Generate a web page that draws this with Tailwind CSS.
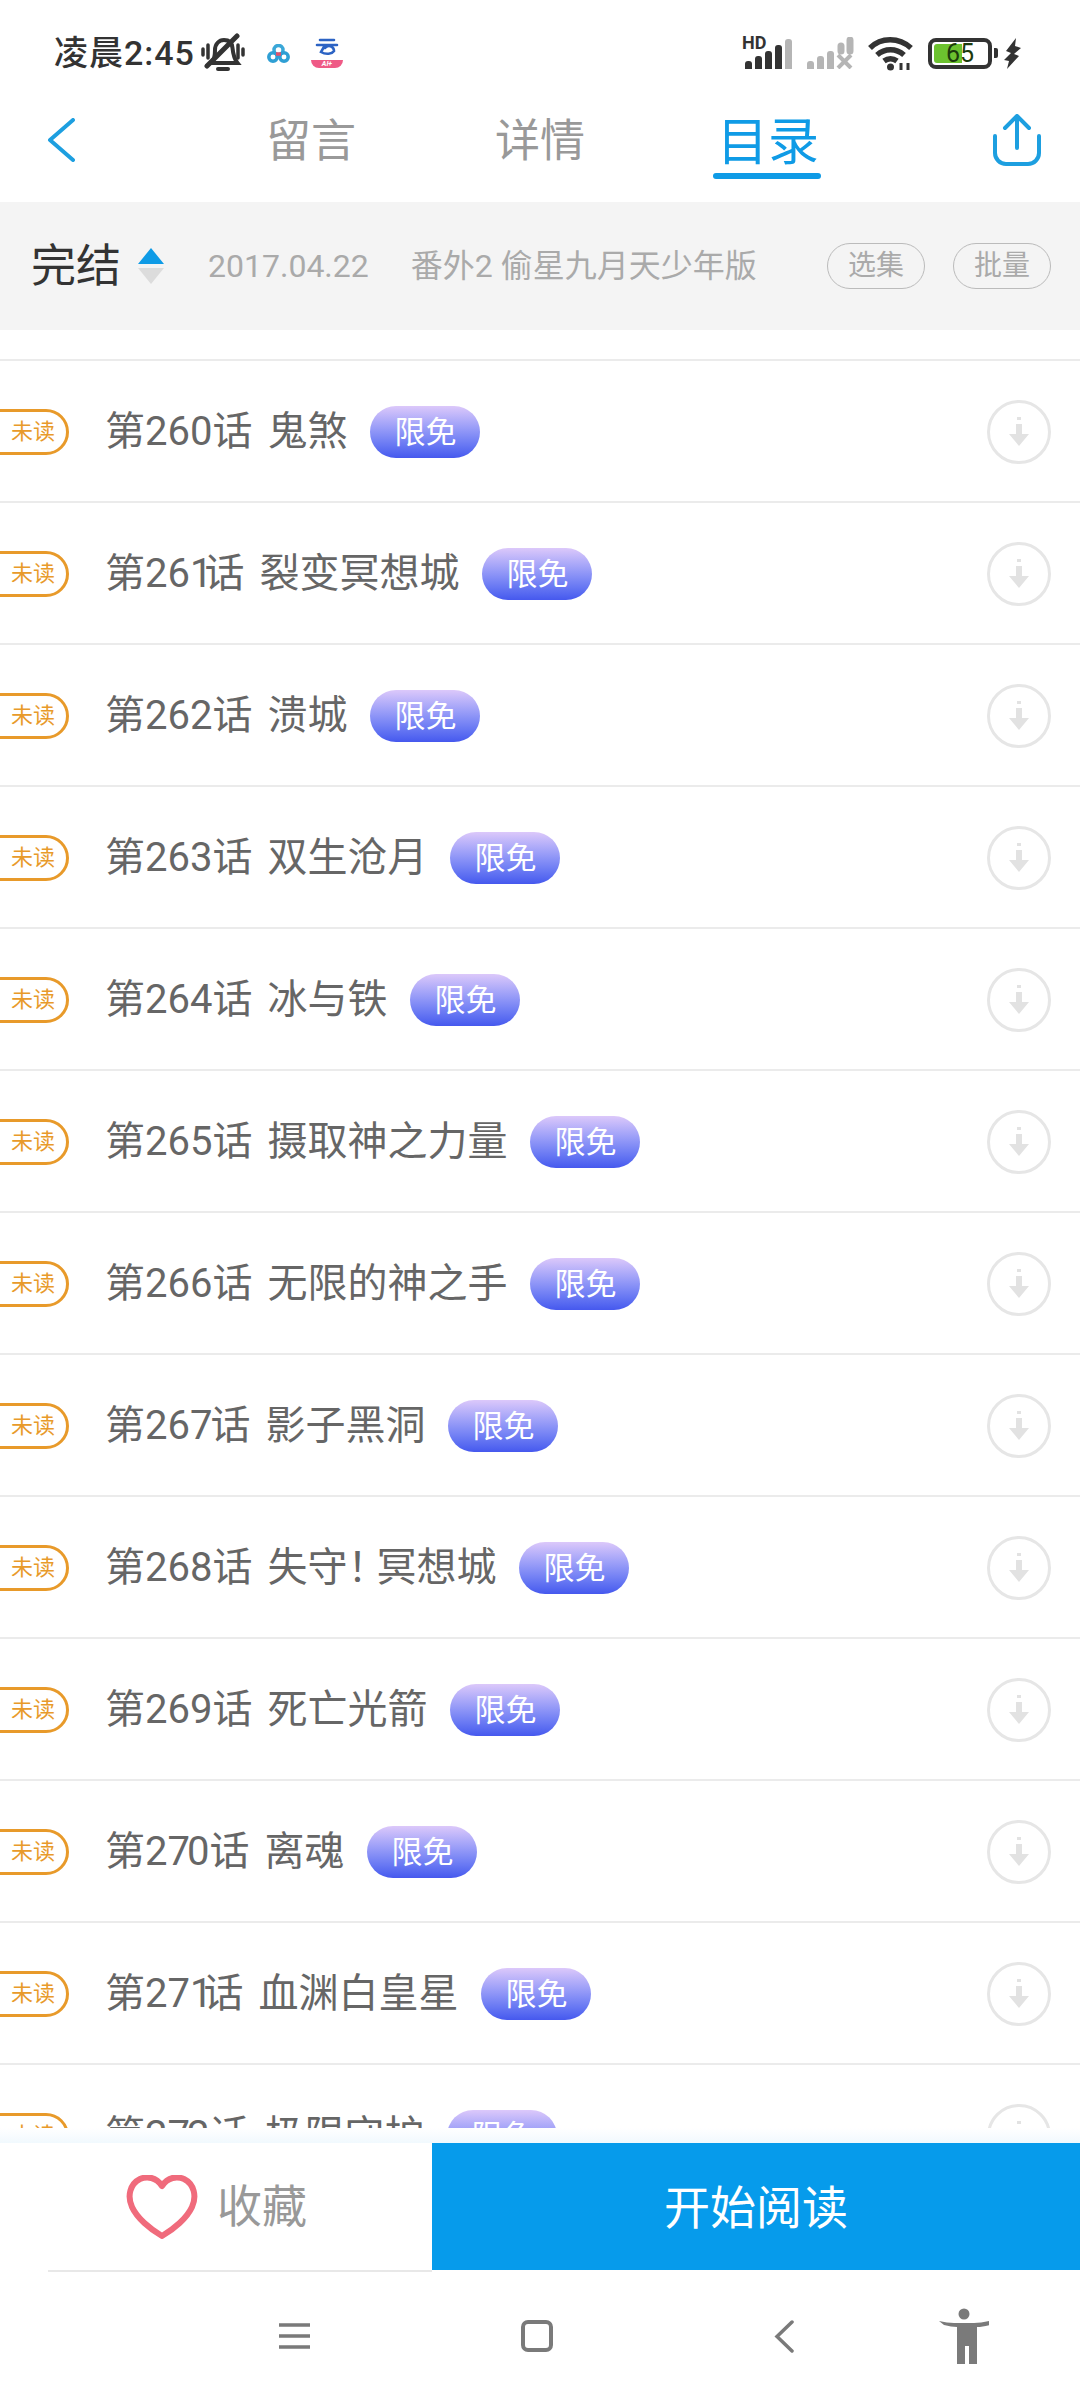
<!DOCTYPE html>
<html lang="zh-CN">
<head>
    <meta charset="UTF-8">
    <title>目录</title>
    <script src="https://cdn.jsdelivr.net/npm/@tailwindcss/browser@4"></script>
</head>
<body class="bg-white font-['Roboto','Noto_Sans_CJK_SC',sans-serif]">
<div class="w-[1080px] h-[2400px] flex flex-col overflow-hidden bg-white">

    <!-- status bar -->
    <div class="h-[106px] shrink-0 flex items-center pl-[54px] pr-[59px] text-[#333]">
        <span class="text-[34px] leading-none font-medium tracking-[1px]">凌晨2:45</span>
        <svg class="ml-[6px]" width="44" height="40" viewBox="0 0 44 40" fill="none" stroke="#333" stroke-linecap="round"><path d="M2 16v6M7 12v13M37 12v13M42 16v6" stroke-width="3.500"/><path d="M10 30c4-3 4-8 4-13 0-6 4-10 9-10s8 3 8.500 8c.5 5 1 10 5 15z" stroke-width="4"/><path d="M17 36h10" stroke-width="4"/><path d="M6 33 36 3" stroke-width="5"/></svg>
        <svg class="ml-[22px]" width="23" height="19" viewBox="0 0 23 19" fill="none" stroke-width="3.500"><circle cx="11.500" cy="6" r="4.500" stroke="#3aa7d8"/><circle cx="6" cy="13" r="4.200" stroke="#2f9fd4"/><circle cx="17" cy="13" r="4.200" stroke="#2f9fd4"/><path d="M9 10h5" stroke="#e0526b"/></svg>
        <div class="ml-[21px] w-[32px] h-[30px] flex flex-col items-center">
            <svg width="24" height="22" viewBox="0 0 24 22" fill="none" stroke="#2c63c4" stroke-width="2.600" stroke-linecap="round"><path d="M5 2h14M2 7h20M10 7l-4 7c5 3 11 2 13-1a5 5 0 0 0-9-3"/></svg>
            <div class="w-[32px] h-[8px] rounded-b-full rounded-t-[3px] bg-[#ef5a86] flex items-center justify-center text-[7px] leading-none font-bold italic text-white">AI+</div>
        </div>
        <div class="ml-auto flex items-center">
            <div class="relative w-[49px] h-[32px]">
                <span class="absolute left-[-3px] top-[-3px] text-[18px] leading-none font-bold text-[#333]">HD</span>
                <div class="absolute inset-0 flex items-end gap-[3px]">
                    <i class="block w-[7px] h-[8px] rounded-t-[3px] bg-[#333]"></i>
                    <i class="block w-[7px] h-[13px] rounded-t-[3px] bg-[#333]"></i>
                    <i class="block w-[7px] h-[18px] rounded-t-[3px] bg-[#333]"></i>
                    <i class="block w-[7px] h-[24px] rounded-t-[3px] bg-[#333]"></i>
                    <i class="block w-[7px] h-[30px] rounded-t-[3px] bg-[#b5b5b5]"></i>
                </div>
            </div>
            <div class="relative ml-[13px] w-[47px] h-[32px] flex items-end gap-[3px]">
                <i class="block w-[7px] h-[8px] rounded-t-[3px] bg-[#b5b5b5]"></i>
                <i class="block w-[7px] h-[13px] rounded-t-[3px] bg-[#b5b5b5]"></i>
                <i class="block w-[7px] h-[18px] rounded-t-[3px] bg-[#b5b5b5]"></i>
                <svg class="absolute right-0 top-0" width="18" height="32" viewBox="0 0 18 32" fill="none" stroke="#b5b5b5"><path d="M5 14v-5M14 14V3" stroke-width="7" stroke-linecap="round"/><path d="M2 18l13 13M15 18 2 31" stroke-width="4"/></svg>
            </div>
            <svg class="ml-[13px]" width="47" height="35" viewBox="0 0 47 35" fill="none" stroke="#333" stroke-width="5.500"><path d="M3 12c11-11 29-11 41 0"/><path d="M10 19c8-7 19-7 27 0"/><path d="M17 25c4-3 9-3 13 0"/><circle cx="23.500" cy="31" r="3.500" fill="#333" stroke="none"/><path d="M34 27v7M41 27v7" stroke-width="3" stroke="#333"/></svg>
            <div class="ml-[14px] relative w-[64px] h-[31px] border-[4px] border-[#333] rounded-[8px] p-[2px]">
                <div class="h-full w-[28px] rounded-l-[3px] bg-[#6cc22f]"></div>
                <span class="absolute inset-0 flex items-center justify-center text-[25px] leading-none text-[#1c3a0c]">65</span>
            </div>
            <i class="block ml-[2px] w-[4px] h-[10px] rounded-r-[2px] bg-[#333]"></i>
            <svg class="ml-[6px]" width="17" height="31" viewBox="0 0 17 31" fill="#333"><path d="M12 0 2 13l5 2-7 7 5 1-2 8L15 18l-5-2 7-6-6-2z"/></svg>
        </div>
    </div>

    <!-- tabs -->
    <div class="h-[96px] shrink-0 flex items-start">
        <svg class="ml-[47px] mt-[12px]" width="28" height="44" viewBox="0 0 28 44" fill="none" stroke="#1d9fe0" stroke-width="4" stroke-linecap="round" stroke-linejoin="round"><path d="M26 2 3 22l23 20"/></svg>
        <span class="ml-[191px] mt-[13px] text-[45px] leading-none text-[#999]">留言</span>
        <span class="ml-[139px] mt-[13px] text-[45px] leading-none text-[#999]">详情</span>
        <div class="ml-[128px] mt-[11px] w-[108px] flex flex-col items-center">
            <span class="pl-[2px] text-[51px] leading-none text-[#0f9be6]">目录</span>
            <i class="block mt-[5px] w-full h-[6px] rounded-full bg-[#0f9be6]"></i>
        </div>
        <svg class="ml-auto mr-[38px] mt-[8px]" width="50" height="52" viewBox="0 0 50 52" fill="none" stroke="#1d9fe0" stroke-width="4" stroke-linecap="round" stroke-linejoin="round"><path d="M25 34V3M13 14 25 2l12 12"/><path d="M3 22v17a11 11 0 0 0 11 11h22a11 11 0 0 0 11-11V22"/></svg>
    </div>

    <!-- sort band -->
    <div class="h-[128px] shrink-0 bg-[#f4f4f4] flex items-center pl-[31px]">
        <span class="text-[45px] leading-none text-[#333]">完结</span>
        <div class="ml-[17px] flex flex-col gap-[4px]">
            <div class="w-0 h-0 border-x-[13px] border-x-transparent border-b-[16px] border-b-[#0f9be6]"></div>
            <div class="w-0 h-0 border-x-[13px] border-x-transparent border-t-[16px] border-t-[#dcdcdc]"></div>
        </div>
        <span class="ml-[44px] text-[32px] leading-none text-[#aaa]">2017.04.22</span>
        <span class="ml-[42px] text-[32px] leading-none text-[#aaa]">番外2 偷星九月天少年版</span>
        <span class="ml-auto w-[98px] h-[46px] border border-[#bbb] rounded-full flex items-center justify-center text-[28px] leading-none text-[#aaa]">选集</span>
        <span class="ml-[28px] mr-[29px] w-[98px] h-[46px] border border-[#bbb] rounded-full flex items-center justify-center text-[28px] leading-none text-[#aaa]">批量</span>
    </div>

    <!-- chapter list -->
    <div class="flex-1 overflow-hidden pt-[29px]">
        <div class="h-[142px] pt-[2px] border-t-2 border-[#ebebeb] flex items-center">
            <span class="ml-[-30px] w-[99px] h-[46px] border-[3px] border-[#e89a2a] rounded-full flex items-center justify-end pr-[11px] text-[22px] leading-none text-[#e89a2a]">未读</span>
            <span class="ml-[36px] text-[40px] leading-none text-[#666]">第260话</span>
            <span class="ml-[15px] text-[40px] leading-none text-[#666]">鬼煞</span>
            <span class="ml-[23px] w-[110px] h-[52px] rounded-full bg-gradient-to-b from-[#dcc8fa] to-[#4658ee] flex items-center justify-center text-[31px] leading-none text-white">限免</span>
            <svg class="ml-auto mr-[29px]" width="64" height="64" viewBox="0 0 64 64" fill="none"><circle cx="32" cy="32" r="30.500" stroke="#e6e6e6" stroke-width="3"/><path d="M30 17h4v3h-4zM29 24h6v10h7L32 46 22 34h7z" fill="#e2e2e2"/></svg>
        </div>
        <div class="h-[142px] pt-[2px] border-t-2 border-[#ebebeb] flex items-center">
            <span class="ml-[-30px] w-[99px] h-[46px] border-[3px] border-[#e89a2a] rounded-full flex items-center justify-end pr-[11px] text-[22px] leading-none text-[#e89a2a]">未读</span>
            <span class="ml-[36px] text-[40px] leading-none text-[#666]">第26<span class="tracking-[-8px]">1</span>话</span>
            <span class="ml-[15px] text-[40px] leading-none text-[#666]">裂变冥想城</span>
            <span class="ml-[23px] w-[110px] h-[52px] rounded-full bg-gradient-to-b from-[#dcc8fa] to-[#4658ee] flex items-center justify-center text-[31px] leading-none text-white">限免</span>
            <svg class="ml-auto mr-[29px]" width="64" height="64" viewBox="0 0 64 64" fill="none"><circle cx="32" cy="32" r="30.500" stroke="#e6e6e6" stroke-width="3"/><path d="M30 17h4v3h-4zM29 24h6v10h7L32 46 22 34h7z" fill="#e2e2e2"/></svg>
        </div>
        <div class="h-[142px] pt-[2px] border-t-2 border-[#ebebeb] flex items-center">
            <span class="ml-[-30px] w-[99px] h-[46px] border-[3px] border-[#e89a2a] rounded-full flex items-center justify-end pr-[11px] text-[22px] leading-none text-[#e89a2a]">未读</span>
            <span class="ml-[36px] text-[40px] leading-none text-[#666]">第262话</span>
            <span class="ml-[15px] text-[40px] leading-none text-[#666]">溃城</span>
            <span class="ml-[23px] w-[110px] h-[52px] rounded-full bg-gradient-to-b from-[#dcc8fa] to-[#4658ee] flex items-center justify-center text-[31px] leading-none text-white">限免</span>
            <svg class="ml-auto mr-[29px]" width="64" height="64" viewBox="0 0 64 64" fill="none"><circle cx="32" cy="32" r="30.500" stroke="#e6e6e6" stroke-width="3"/><path d="M30 17h4v3h-4zM29 24h6v10h7L32 46 22 34h7z" fill="#e2e2e2"/></svg>
        </div>
        <div class="h-[142px] pt-[2px] border-t-2 border-[#ebebeb] flex items-center">
            <span class="ml-[-30px] w-[99px] h-[46px] border-[3px] border-[#e89a2a] rounded-full flex items-center justify-end pr-[11px] text-[22px] leading-none text-[#e89a2a]">未读</span>
            <span class="ml-[36px] text-[40px] leading-none text-[#666]">第263话</span>
            <span class="ml-[15px] text-[40px] leading-none text-[#666]">双生沧月</span>
            <span class="ml-[23px] w-[110px] h-[52px] rounded-full bg-gradient-to-b from-[#dcc8fa] to-[#4658ee] flex items-center justify-center text-[31px] leading-none text-white">限免</span>
            <svg class="ml-auto mr-[29px]" width="64" height="64" viewBox="0 0 64 64" fill="none"><circle cx="32" cy="32" r="30.500" stroke="#e6e6e6" stroke-width="3"/><path d="M30 17h4v3h-4zM29 24h6v10h7L32 46 22 34h7z" fill="#e2e2e2"/></svg>
        </div>
        <div class="h-[142px] pt-[2px] border-t-2 border-[#ebebeb] flex items-center">
            <span class="ml-[-30px] w-[99px] h-[46px] border-[3px] border-[#e89a2a] rounded-full flex items-center justify-end pr-[11px] text-[22px] leading-none text-[#e89a2a]">未读</span>
            <span class="ml-[36px] text-[40px] leading-none text-[#666]">第264话</span>
            <span class="ml-[15px] text-[40px] leading-none text-[#666]">冰与铁</span>
            <span class="ml-[23px] w-[110px] h-[52px] rounded-full bg-gradient-to-b from-[#dcc8fa] to-[#4658ee] flex items-center justify-center text-[31px] leading-none text-white">限免</span>
            <svg class="ml-auto mr-[29px]" width="64" height="64" viewBox="0 0 64 64" fill="none"><circle cx="32" cy="32" r="30.500" stroke="#e6e6e6" stroke-width="3"/><path d="M30 17h4v3h-4zM29 24h6v10h7L32 46 22 34h7z" fill="#e2e2e2"/></svg>
        </div>
        <div class="h-[142px] pt-[2px] border-t-2 border-[#ebebeb] flex items-center">
            <span class="ml-[-30px] w-[99px] h-[46px] border-[3px] border-[#e89a2a] rounded-full flex items-center justify-end pr-[11px] text-[22px] leading-none text-[#e89a2a]">未读</span>
            <span class="ml-[36px] text-[40px] leading-none text-[#666]">第265话</span>
            <span class="ml-[15px] text-[40px] leading-none text-[#666]">摄取神之力量</span>
            <span class="ml-[23px] w-[110px] h-[52px] rounded-full bg-gradient-to-b from-[#dcc8fa] to-[#4658ee] flex items-center justify-center text-[31px] leading-none text-white">限免</span>
            <svg class="ml-auto mr-[29px]" width="64" height="64" viewBox="0 0 64 64" fill="none"><circle cx="32" cy="32" r="30.500" stroke="#e6e6e6" stroke-width="3"/><path d="M30 17h4v3h-4zM29 24h6v10h7L32 46 22 34h7z" fill="#e2e2e2"/></svg>
        </div>
        <div class="h-[142px] pt-[2px] border-t-2 border-[#ebebeb] flex items-center">
            <span class="ml-[-30px] w-[99px] h-[46px] border-[3px] border-[#e89a2a] rounded-full flex items-center justify-end pr-[11px] text-[22px] leading-none text-[#e89a2a]">未读</span>
            <span class="ml-[36px] text-[40px] leading-none text-[#666]">第266话</span>
            <span class="ml-[15px] text-[40px] leading-none text-[#666]">无限的神之手</span>
            <span class="ml-[23px] w-[110px] h-[52px] rounded-full bg-gradient-to-b from-[#dcc8fa] to-[#4658ee] flex items-center justify-center text-[31px] leading-none text-white">限免</span>
            <svg class="ml-auto mr-[29px]" width="64" height="64" viewBox="0 0 64 64" fill="none"><circle cx="32" cy="32" r="30.500" stroke="#e6e6e6" stroke-width="3"/><path d="M30 17h4v3h-4zM29 24h6v10h7L32 46 22 34h7z" fill="#e2e2e2"/></svg>
        </div>
        <div class="h-[142px] pt-[2px] border-t-2 border-[#ebebeb] flex items-center">
            <span class="ml-[-30px] w-[99px] h-[46px] border-[3px] border-[#e89a2a] rounded-full flex items-center justify-end pr-[11px] text-[22px] leading-none text-[#e89a2a]">未读</span>
            <span class="ml-[36px] text-[40px] leading-none text-[#666]">第26<span class="tracking-[-2px]">7</span>话</span>
            <span class="ml-[15px] text-[40px] leading-none text-[#666]">影子黑洞</span>
            <span class="ml-[23px] w-[110px] h-[52px] rounded-full bg-gradient-to-b from-[#dcc8fa] to-[#4658ee] flex items-center justify-center text-[31px] leading-none text-white">限免</span>
            <svg class="ml-auto mr-[29px]" width="64" height="64" viewBox="0 0 64 64" fill="none"><circle cx="32" cy="32" r="30.500" stroke="#e6e6e6" stroke-width="3"/><path d="M30 17h4v3h-4zM29 24h6v10h7L32 46 22 34h7z" fill="#e2e2e2"/></svg>
        </div>
        <div class="h-[142px] pt-[2px] border-t-2 border-[#ebebeb] flex items-center">
            <span class="ml-[-30px] w-[99px] h-[46px] border-[3px] border-[#e89a2a] rounded-full flex items-center justify-end pr-[11px] text-[22px] leading-none text-[#e89a2a]">未读</span>
            <span class="ml-[36px] text-[40px] leading-none text-[#666]">第268话</span>
            <span class="ml-[15px] text-[40px] leading-none text-[#666]">失守<span class="tracking-[-11px]">！</span>冥想城</span>
            <span class="ml-[23px] w-[110px] h-[52px] rounded-full bg-gradient-to-b from-[#dcc8fa] to-[#4658ee] flex items-center justify-center text-[31px] leading-none text-white">限免</span>
            <svg class="ml-auto mr-[29px]" width="64" height="64" viewBox="0 0 64 64" fill="none"><circle cx="32" cy="32" r="30.500" stroke="#e6e6e6" stroke-width="3"/><path d="M30 17h4v3h-4zM29 24h6v10h7L32 46 22 34h7z" fill="#e2e2e2"/></svg>
        </div>
        <div class="h-[142px] pt-[2px] border-t-2 border-[#ebebeb] flex items-center">
            <span class="ml-[-30px] w-[99px] h-[46px] border-[3px] border-[#e89a2a] rounded-full flex items-center justify-end pr-[11px] text-[22px] leading-none text-[#e89a2a]">未读</span>
            <span class="ml-[36px] text-[40px] leading-none text-[#666]">第269话</span>
            <span class="ml-[15px] text-[40px] leading-none text-[#666]">死亡光箭</span>
            <span class="ml-[23px] w-[110px] h-[52px] rounded-full bg-gradient-to-b from-[#dcc8fa] to-[#4658ee] flex items-center justify-center text-[31px] leading-none text-white">限免</span>
            <svg class="ml-auto mr-[29px]" width="64" height="64" viewBox="0 0 64 64" fill="none"><circle cx="32" cy="32" r="30.500" stroke="#e6e6e6" stroke-width="3"/><path d="M30 17h4v3h-4zM29 24h6v10h7L32 46 22 34h7z" fill="#e2e2e2"/></svg>
        </div>
        <div class="h-[142px] pt-[2px] border-t-2 border-[#ebebeb] flex items-center">
            <span class="ml-[-30px] w-[99px] h-[46px] border-[3px] border-[#e89a2a] rounded-full flex items-center justify-end pr-[11px] text-[22px] leading-none text-[#e89a2a]">未读</span>
            <span class="ml-[36px] text-[40px] leading-none text-[#666]">第2<span class="tracking-[-3px]">7</span>0话</span>
            <span class="ml-[15px] text-[40px] leading-none text-[#666]">离魂</span>
            <span class="ml-[23px] w-[110px] h-[52px] rounded-full bg-gradient-to-b from-[#dcc8fa] to-[#4658ee] flex items-center justify-center text-[31px] leading-none text-white">限免</span>
            <svg class="ml-auto mr-[29px]" width="64" height="64" viewBox="0 0 64 64" fill="none"><circle cx="32" cy="32" r="30.500" stroke="#e6e6e6" stroke-width="3"/><path d="M30 17h4v3h-4zM29 24h6v10h7L32 46 22 34h7z" fill="#e2e2e2"/></svg>
        </div>
        <div class="h-[142px] pt-[2px] border-t-2 border-[#ebebeb] flex items-center">
            <span class="ml-[-30px] w-[99px] h-[46px] border-[3px] border-[#e89a2a] rounded-full flex items-center justify-end pr-[11px] text-[22px] leading-none text-[#e89a2a]">未读</span>
            <span class="ml-[36px] text-[40px] leading-none text-[#666]">第27<span class="tracking-[-9px]">1</span>话</span>
            <span class="ml-[15px] text-[40px] leading-none text-[#666]">血渊白皇星</span>
            <span class="ml-[23px] w-[110px] h-[52px] rounded-full bg-gradient-to-b from-[#dcc8fa] to-[#4658ee] flex items-center justify-center text-[31px] leading-none text-white">限免</span>
            <svg class="ml-auto mr-[29px]" width="64" height="64" viewBox="0 0 64 64" fill="none"><circle cx="32" cy="32" r="30.500" stroke="#e6e6e6" stroke-width="3"/><path d="M30 17h4v3h-4zM29 24h6v10h7L32 46 22 34h7z" fill="#e2e2e2"/></svg>
        </div>
        <div class="h-[142px] pt-[2px] border-t-2 border-[#ebebeb] flex items-center">
            <span class="ml-[-30px] w-[99px] h-[46px] border-[3px] border-[#e89a2a] rounded-full flex items-center justify-end pr-[11px] text-[22px] leading-none text-[#e89a2a]">未读</span>
            <span class="ml-[36px] text-[40px] leading-none text-[#666]">第2<span class="tracking-[-3px]">7</span>2话</span>
            <span class="ml-[15px] text-[40px] leading-none text-[#666]">极限守护</span>
            <span class="ml-[23px] w-[110px] h-[52px] rounded-full bg-gradient-to-b from-[#dcc8fa] to-[#4658ee] flex items-center justify-center text-[31px] leading-none text-white">限免</span>
            <svg class="ml-auto mr-[29px]" width="64" height="64" viewBox="0 0 64 64" fill="none"><circle cx="32" cy="32" r="30.500" stroke="#e6e6e6" stroke-width="3"/><path d="M30 17h4v3h-4zM29 24h6v10h7L32 46 22 34h7z" fill="#e2e2e2"/></svg>
        </div>
    </div>

    <!-- bottom actions -->
    <div class="h-[15px] shrink-0 bg-gradient-to-b from-white to-[#f1f9fe]"></div>
    <div class="h-[127px] shrink-0 flex">
        <div class="w-[432px] flex items-center pl-[126px]">
            <svg width="72" height="64" viewBox="0 0 72 64" fill="none" stroke="#f06b7c" stroke-width="6" stroke-linejoin="round"><path d="M36 11C30 2 21 1 14 4 4 9 1 21 6 32c5 11 18 22 30 29 12-7 25-18 30-29 5-11 2-23-8-28-7-3-16-2-22 7z"/></svg>
            <span class="ml-[19px] mt-[2px] text-[45px] leading-none text-[#999]">收藏</span>
        </div>
        <div class="flex-1 bg-[#069beb] flex items-center justify-center pt-[2px] text-[46px] leading-none text-white">开始阅读</div>
    </div>
    <div class="ml-[48px] w-[384px] h-[2px] shrink-0 bg-[#e8e8e8]"></div>
    <div class="h-[128px] shrink-0 flex items-center pl-[279px]">
        <svg width="31" height="28" viewBox="0 0 31 28" fill="none" stroke="#7a7a7a" stroke-width="3.500"><path d="M0 3h31M0 14h31M0 25h31"/></svg>
        <div class="ml-[211px] w-[32px] h-[32px] border-[4px] border-[#7a7a7a] rounded-[7px]"></div>
        <svg class="ml-[221px]" width="20" height="33" viewBox="0 0 20 33" fill="none" stroke="#7a7a7a" stroke-width="3.500" stroke-linecap="round"><path d="M18 2 3 16.500 18 31"/></svg>
        <svg class="ml-[145px]" width="50" height="56" viewBox="0 0 50 56" fill="#7a7a7a"><circle cx="25" cy="6" r="5.500"/><path d="M0 13c5 1 11 2 15 2h20c4 0 10-1 15-2l1 4c-5 1-9 2-13 2v37h-8V38h-4v18h-8V19c-4 0-8-1-13-2z"/></svg>
    </div>
</div>
</body>
</html>
